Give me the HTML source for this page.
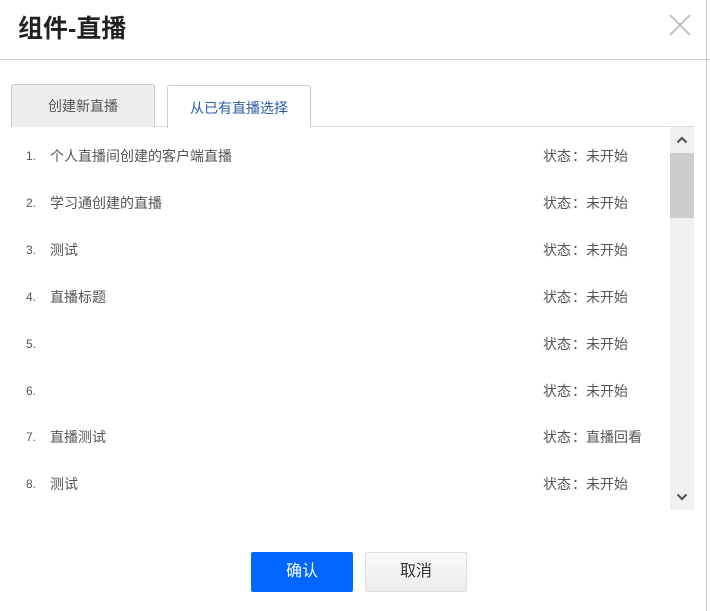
<!DOCTYPE html>
<html><head><meta charset="utf-8"><style>
body{margin:0;width:710px;height:611px;background:#fff;font-family:"Liberation Sans","Noto Sans CJK SC",sans-serif;position:relative;overflow:hidden}
.a{position:absolute}
.row{position:absolute;left:0;font-size:14px;color:#555;height:20px;line-height:20px}
</style></head><body>
<div class="a" style="left:18px;top:12px;font-size:25px;font-weight:bold;color:#222;line-height:34px">组件-直播</div>
<svg class="a" style="left:669px;top:14px" width="22" height="22"><path d="M1 1L21 21M21 1L1 21" stroke="#bbb" stroke-width="1.6"/></svg>
<div class="a" style="left:0;top:59px;width:710px;height:1px;background:#ccc"></div>
<div class="a" style="right:3px;top:0;width:1px;height:611px;background:#ccc"></div>
<div class="a" style="left:11px;top:126px;width:684px;height:1px;background:#ddd"></div>
<div class="a" style="left:11px;top:84px;width:142px;height:42px;background:#eee;border:1px solid #ccc;border-bottom:none;border-radius:3px 3px 0 0;font-size:14px;color:#555;text-align:center;line-height:42px">创建新直播</div>
<div class="a" style="left:167px;top:85px;width:142px;height:42px;background:#fff;border:1px solid #ccc;border-bottom:none;border-radius:3px 3px 0 0;font-size:14px;color:#2a5caa;text-align:center;line-height:44px">从已有直播选择</div>
<div class="a" style="left:670px;top:127px;width:24px;height:383px;background:#f0f0f0"></div>
<div class="a" style="left:670px;top:153px;width:24px;height:65px;background:#cdcdcd"></div>
<svg class="a" style="left:676px;top:135px" width="12" height="10"><path d="M1.5 7.5L6 3L10.5 7.5" stroke="#555" stroke-width="2.2" fill="none"/></svg>
<svg class="a" style="left:676px;top:492px" width="12" height="10"><path d="M1.5 2.5L6 7L10.5 2.5" stroke="#555" stroke-width="2.2" fill="none"/></svg>
<div id="list"></div>
<script>
var d=[["个人直播间创建的客户端直播","未开始"],["学习通创建的直播","未开始"],["测试","未开始"],["直播标题","未开始"],["","未开始"],["","未开始"],["直播测试","直播回看"],["测试","未开始"]];
var h="";d.forEach(function(r,i){var y=146+i*46.9;
h+='<div class="row" style="top:'+y+'px;left:26px;font-size:12px">'+(i+1)+'.</div><div class="row" style="top:'+y+'px;left:50px">'+r[0]+'</div><div class="row" style="top:'+y+'px;left:543px">状态</div><div class="row" style="top:'+y+'px;left:572px">：</div><div class="row" style="top:'+y+'px;left:586px">'+r[1]+'</div>';});
document.getElementById("list").innerHTML=h;
</script>
<div class="a" style="left:251px;top:552px;width:102px;height:40px;background:#0066ff;border-radius:2px;color:#fff;font-size:16px;text-align:center;line-height:40px">确认</div>
<div class="a" style="left:365px;top:552px;width:100px;height:38px;background:linear-gradient(#fafafa,#ececec);border:1px solid #ddd;border-radius:2px;color:#333;font-size:16px;text-align:center;line-height:38px">取消</div>
</body></html>
